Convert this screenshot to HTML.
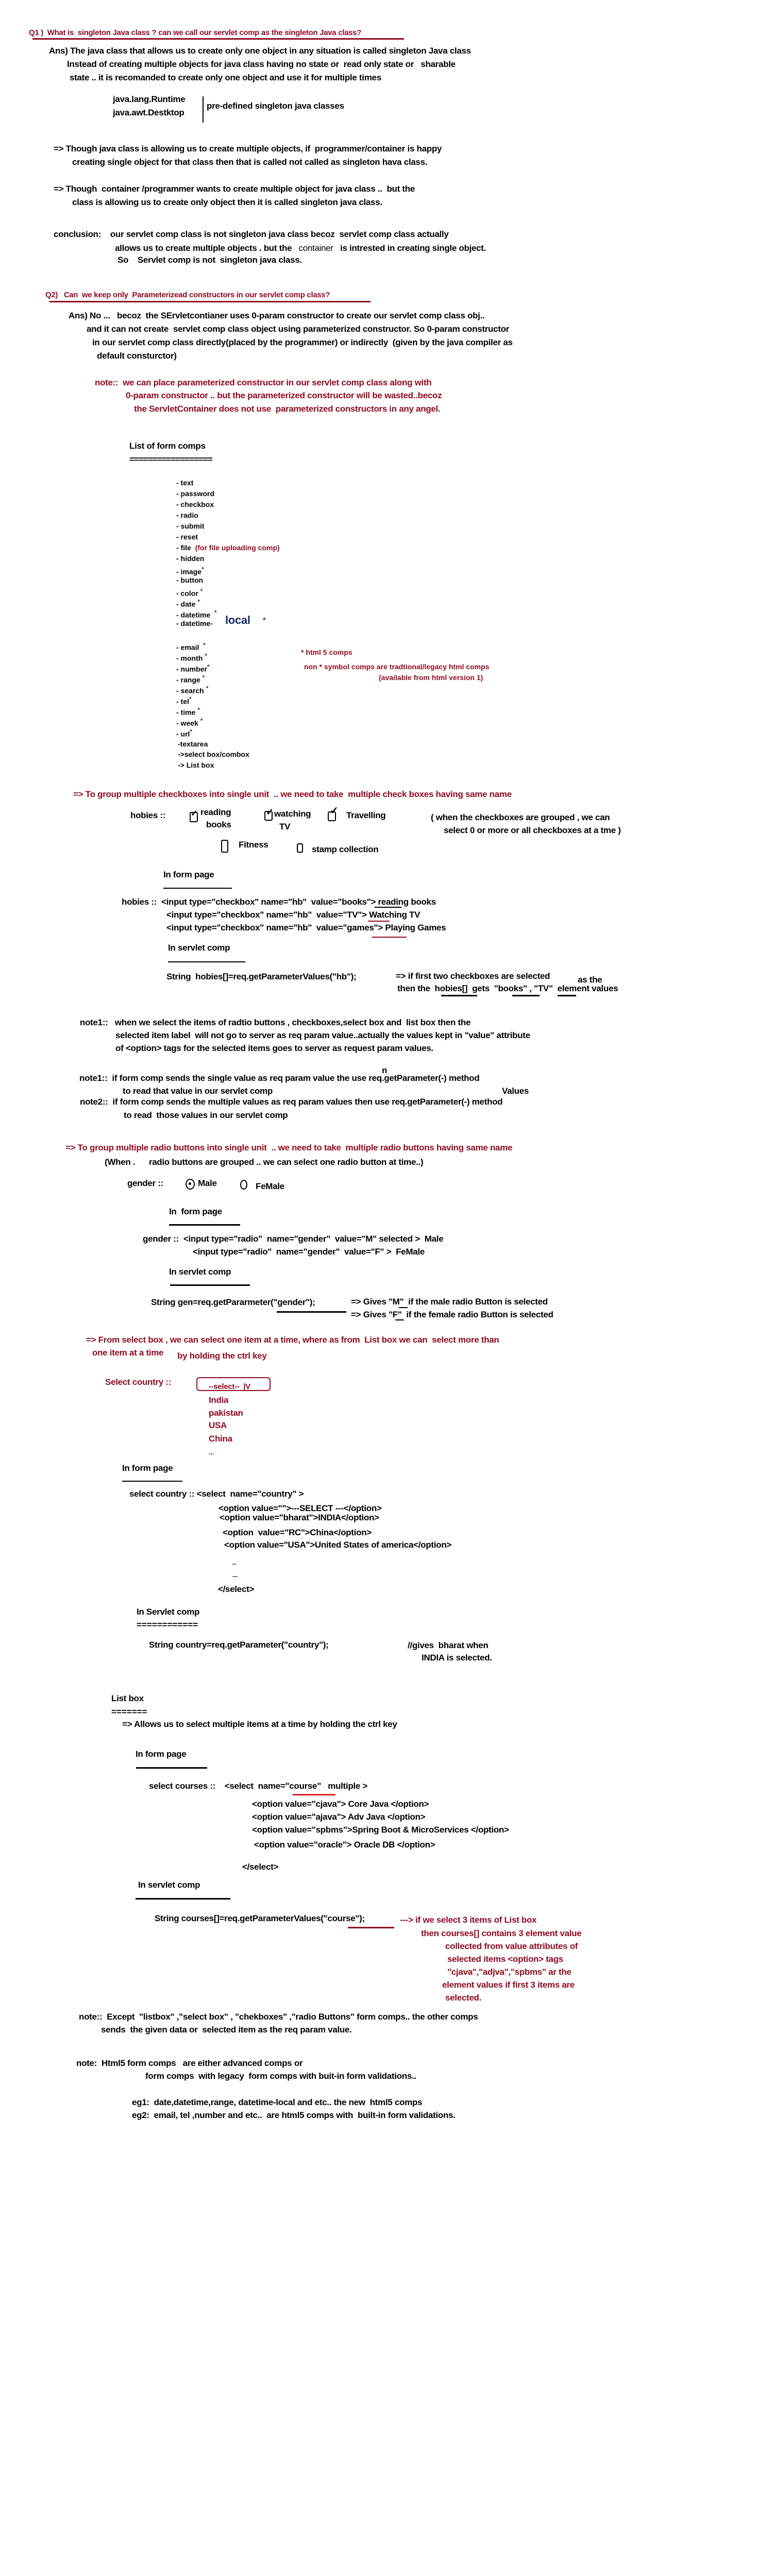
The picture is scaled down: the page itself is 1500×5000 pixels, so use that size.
<!DOCTYPE html>
<html><head><meta charset="utf-8">
<style>
html,body{margin:0;padding:0;background:#fff;}
body{width:1500px;height:5000px;position:relative;overflow:hidden;font-family:"Liberation Sans",sans-serif;}
.t{position:absolute;white-space:pre;line-height:20px;font-weight:bold;font-size:17px;color:#000;letter-spacing:-0.3px;}
.r{color:#8f0c22;}
.s{font-size:14px;letter-spacing:0;}
.h{font-size:15px;}
.ln{position:absolute;background:#000;}
.rl{position:absolute;background:#8f0c22;}
.cb{position:absolute;border:2px solid #000;border-radius:3px;}
.st{color:#8f0c22;font-size:12px;vertical-align:super;}
</style></head><body>

<!-- Q1 -->
<div class="t r h" style="left:56px;top:54px">Q1 )  What is  singleton Java class ? can we call our servlet comp as the singleton Java class?</div>
<div class="rl" style="left:63px;top:74px;width:721px;height:3px"></div>
<div class="t" style="left:95px;top:89px">Ans) The java class that allows us to create only one object in any situation is called singleton Java class</div>
<div class="t" style="left:130px;top:115px">Instead of creating multiple objects for java class having no state or  read only state or   sharable</div>
<div class="t" style="left:135px;top:141px">state .. it is recomanded to create only one object and use it for multiple times</div>
<div class="t" style="left:219px;top:183px">java.lang.Runtime</div>
<div class="t" style="left:219px;top:209px">java.awt.Destktop</div>
<div class="ln" style="left:393px;top:187px;width:2px;height:51px"></div>
<div class="t" style="left:401px;top:196px">pre-defined singleton java classes</div>
<div class="t" style="left:104px;top:279px">=&gt; Though java class is allowing us to create multiple objects, if  programmer/container is happy</div>
<div class="t" style="left:140px;top:305px">creating single object for that class then that is called not called as singleton hava class.</div>
<div class="t" style="left:104px;top:357px">=&gt; Though  container /programmer wants to create multiple object for java class ..  but the</div>
<div class="t" style="left:140px;top:383px">class is allowing us to create only object then it is called singleton java class.</div>
<div class="t" style="left:104px;top:445px">conclusion:    our servlet comp class is not singleton java class becoz  servlet comp class actually</div>
<div class="t" style="left:223px;top:472px">allows us to create multiple objects . but the   <span style="font-weight:normal">container</span>   is intrested in creating single object.</div>
<div class="t" style="left:228px;top:495px">So    Servlet comp is not  singleton java class.</div>

<!-- Q2 -->
<div class="t r h" style="left:88px;top:563px">Q2)   Can  we keep only  Parameterizead constructors in our servlet comp class?</div>
<div class="rl" style="left:96px;top:584px;width:623px;height:3px"></div>
<div class="t" style="left:133px;top:603px">Ans) No ...   becoz  the SErvletcontianer uses 0-param constructor to create our servlet comp class obj..</div>
<div class="t" style="left:168px;top:629px">and it can not create  servlet comp class object using parameterized constructor. So 0-param constructor</div>
<div class="t" style="left:179px;top:655px">in our servlet comp class directly(placed by the programmer) or indirectly  (given by the java compiler as</div>
<div class="t" style="left:188px;top:681px">default consturctor)</div>
<div class="t r" style="left:184px;top:733px">note::  we can place parameterized constructor in our servlet comp class along with</div>
<div class="t r" style="left:244px;top:758px">0-param constructor .. but the parameterized constructor will be wasted..becoz</div>
<div class="t r" style="left:260px;top:784px">the ServletContainer does not use  parameterized constructors in any angel.</div>
<div class="t" style="left:251px;top:856px">List of form comps</div>
<div class="t" style="left:251px;top:882px;letter-spacing:-1px">==================</div>

<!-- list -->
<div class="t s" style="left:342px;top:927px">- text</div>
<div class="t s" style="left:342px;top:948px">- password</div>
<div class="t s" style="left:342px;top:969px">- checkbox</div>
<div class="t s" style="left:342px;top:990px">- radio</div>
<div class="t s" style="left:342px;top:1011px">- submit</div>
<div class="t s" style="left:342px;top:1032px">- reset</div>
<div class="t s" style="left:342px;top:1053px">- file  <span class="r">(for file uploading comp)</span></div>
<div class="t s" style="left:342px;top:1074px">- hidden</div>
<div class="t s" style="left:342px;top:1095px">- image<span class="st">*</span></div>
<div class="t s" style="left:342px;top:1116px">- button</div>
<div class="t s" style="left:342px;top:1137px">- color <span class="st">*</span></div>
<div class="t s" style="left:342px;top:1158px">- date <span class="st">*</span></div>
<div class="t s" style="left:342px;top:1179px">- datetime  <span class="st">*</span></div>
<div class="t s" style="left:342px;top:1200px">- datetime-</div>
<div class="t" style="left:437px;top:1194px;font-size:22px;color:#1a2a6a">local</div>
<div class="t s r" style="left:510px;top:1193px">*</div>
<div class="t s" style="left:342px;top:1242px">- email  <span class="st">*</span></div>
<div class="t s" style="left:342px;top:1263px">- month <span class="st">*</span></div>
<div class="t s" style="left:342px;top:1284px">- number<span class="st">*</span></div>
<div class="t s" style="left:342px;top:1305px">- range <span class="st">*</span></div>
<div class="t s" style="left:342px;top:1326px">- search <span class="st">*</span></div>
<div class="t s" style="left:342px;top:1347px">- tel<span class="st">*</span></div>
<div class="t s" style="left:342px;top:1368px">- time <span class="st">*</span></div>
<div class="t s" style="left:342px;top:1389px">- week <span class="st">*</span></div>
<div class="t s" style="left:342px;top:1410px">- url<span class="st">*</span></div>
<div class="t s" style="left:345px;top:1434px">-textarea</div>
<div class="t s" style="left:345px;top:1454px">-&gt;select box/combox</div>
<div class="t s" style="left:345px;top:1475px">-&gt; List box</div>
<div class="t s r" style="left:584px;top:1256px">* html 5 comps</div>
<div class="t s r" style="left:590px;top:1284px">non * symbol comps are tradtional/legacy html comps</div>
<div class="t s r" style="left:735px;top:1305px">(available from html version 1)</div>

<!-- checkboxes -->
<div class="t r" style="left:142px;top:1532px">=&gt; To group multiple checkboxes into single unit  .. we need to take  multiple check boxes having same name</div>
<div class="t" style="left:253px;top:1573px">hobies ::</div>
<div class="cb" style="left:368px;top:1576px;width:12px;height:16px"></div><div class="t" style="left:370px;top:1570px;font-size:16px">✓</div>
<div class="t" style="left:389px;top:1567px">reading</div>
<div class="t" style="left:400px;top:1591px">books</div>
<div class="cb" style="left:513px;top:1574px;width:12px;height:15px"></div><div class="t" style="left:516px;top:1566px;font-size:18px">✓</div>
<div class="t" style="left:532px;top:1570px">watching</div>
<div class="t" style="left:542px;top:1595px">TV</div>
<div class="cb" style="left:636px;top:1575px;width:12px;height:15px"></div><div class="t" style="left:640px;top:1564px;font-size:20px">✓</div>
<div class="t" style="left:672px;top:1573px">Travelling</div>
<div class="t" style="left:836px;top:1577px">( when the checkboxes are grouped , we can</div>
<div class="t" style="left:861px;top:1602px">select 0 or more or all checkboxes at a tme )</div>
<div class="cb" style="left:429px;top:1630px;width:10px;height:21px"></div>
<div class="t" style="left:463px;top:1630px">Fitness</div>
<div class="cb" style="left:576px;top:1637px;width:8px;height:14px"></div>
<div class="t" style="left:605px;top:1639px">stamp collection</div>
<div class="t" style="left:317px;top:1688px">In form page</div>
<div class="ln" style="left:317px;top:1723px;width:133px;height:2px"></div>
<div class="t" style="left:236px;top:1741px">hobies ::  &lt;input type="checkbox" name="hb"  value="books"&gt; reading books</div>
<div class="ln" style="left:727px;top:1760px;width:52px;height:2px"></div>
<div class="t" style="left:323px;top:1766px">&lt;input type="checkbox" name="hb"  value="TV"&gt; Watching TV</div>
<div class="rl" style="left:714px;top:1787px;width:42px;height:2px"></div>
<div class="t" style="left:323px;top:1791px">&lt;input type="checkbox" name="hb"  value="games"&gt; Playing Games</div>
<div class="rl" style="left:722px;top:1818px;width:67px;height:2px"></div>
<div class="t" style="left:326px;top:1830px">In servlet comp</div>
<div class="ln" style="left:326px;top:1866px;width:150px;height:2px"></div>
<div class="t" style="left:323px;top:1886px">String  hobies[]=req.getParameterValues("hb");</div>
<div class="t" style="left:768px;top:1885px">=&gt; if first two checkboxes are selected</div>
<div class="t" style="left:1121px;top:1892px">as the</div>
<div class="t" style="left:771px;top:1909px">then the  hobies[]  gets  "books" , "TV"  element values</div>
<div class="ln" style="left:856px;top:1931px;width:70px;height:3px"></div>
<div class="ln" style="left:994px;top:1931px;width:53px;height:3px"></div>
<div class="ln" style="left:1082px;top:1931px;width:36px;height:3px"></div>

<!-- notes -->
<div class="t" style="left:155px;top:1975px">note1::   when we select the items of radtio buttons , checkboxes,select box and  list box then the</div>
<div class="t" style="left:224px;top:2000px">selected item label  will not go to server as req param value..actually the values kept in "value" attribute</div>
<div class="t" style="left:224px;top:2025px">of &lt;option&gt; tags for the selected items goes to server as request param values.</div>
<div class="t" style="left:741px;top:2068px">n</div>
<div class="t" style="left:154px;top:2083px">note1::  if form comp sends the single value as req param value the use req.getParameter(-) method</div>
<div class="t" style="left:238px;top:2108px">to read that value in our servlet comp</div>
<div class="t" style="left:974px;top:2108px">Values</div>
<div class="t" style="left:155px;top:2129px">note2::  if form comp sends the multiple values as req param values then use req.getParameter(-) method</div>
<div class="t" style="left:240px;top:2155px">to read  those values in our servlet comp</div>

<!-- radio -->
<div class="t r" style="left:127px;top:2218px">=&gt; To group multiple radio buttons into single unit  .. we need to take  multiple radio buttons having same name</div>
<div class="t" style="left:203px;top:2246px">(When .      radio buttons are grouped .. we can select one radio button at time..)</div>
<div class="t" style="left:247px;top:2287px">gender ::</div>
<div style="position:absolute;left:360px;top:2288px;width:14px;height:17px;border:2px solid #000;border-radius:50%"></div>
<div style="position:absolute;left:366px;top:2295px;width:5px;height:5px;background:#000;border-radius:50%"></div>
<div class="t" style="left:384px;top:2287px">Male</div>
<div style="position:absolute;left:466px;top:2290px;width:10px;height:15px;border:2px solid #000;border-radius:50%"></div>
<div class="t" style="left:496px;top:2293px">FeMale</div>
<div class="t" style="left:328px;top:2342px">In  form page</div>
<div class="ln" style="left:328px;top:2376px;width:138px;height:3px"></div>
<div class="t" style="left:277px;top:2395px">gender ::  &lt;input type="radio"  name="gender"  value="M" selected &gt;  Male</div>
<div class="t" style="left:374px;top:2420px">&lt;input type="radio"  name="gender"  value="F" &gt;  FeMale</div>
<div class="t" style="left:328px;top:2459px">In servlet comp</div>
<div class="ln" style="left:330px;top:2493px;width:155px;height:3px"></div>
<div class="t" style="left:293px;top:2518px">String gen=req.getPararmeter("gender");</div>
<div class="ln" style="left:537px;top:2545px;width:135px;height:3px"></div>
<div class="t" style="left:681px;top:2517px">=&gt; Gives "M"  if the male radio Button is selected</div>
<div class="ln" style="left:774px;top:2537px;width:17px;height:2px"></div>
<div class="t" style="left:681px;top:2542px">=&gt; Gives "F"  if the female radio Button is selected</div>
<div class="ln" style="left:767px;top:2561px;width:17px;height:2px"></div>

<!-- select -->
<div class="t r" style="left:167px;top:2591px">=&gt; From select box , we can select one item at a time, where as from  List box we can  select more than</div>
<div class="t r" style="left:179px;top:2616px">one item at a time</div>
<div class="t r" style="left:344px;top:2622px">by holding the ctrl key</div>
<div class="t r" style="left:204px;top:2673px">Select country ::</div>
<div style="position:absolute;left:381px;top:2673px;width:140px;height:23px;border:2px solid #8f0c22;border-radius:6px"></div>
<div class="t r" style="left:405px;top:2682px;font-size:15px">--select--  |V</div>
<div class="t r" style="left:405px;top:2708px">India</div>
<div class="t r" style="left:405px;top:2733px">pakistan</div>
<div class="t r" style="left:405px;top:2757px">USA</div>
<div class="t r" style="left:405px;top:2783px">China</div>
<div class="t r" style="left:405px;top:2809px;font-size:13px">...</div>
<div class="t" style="left:237px;top:2840px">In form page</div>
<div class="ln" style="left:237px;top:2874px;width:117px;height:2px"></div>
<div class="t" style="left:251px;top:2890px">select country :: &lt;select  name="country" &gt;</div>
<div class="t" style="left:424px;top:2918px">&lt;option value=""&gt;---SELECT ---&lt;/option&gt;</div>
<div class="t" style="left:426px;top:2936px">&lt;option value="bharat"&gt;INDIA&lt;/option&gt;</div>
<div class="t" style="left:432px;top:2965px">&lt;option  value="RC"&gt;China&lt;/option&gt;</div>
<div class="t" style="left:435px;top:2989px">&lt;option value="USA"&gt;United States of america&lt;/option&gt;</div>
<div class="t" style="left:451px;top:3023px;font-size:13px">..</div>
<div class="t" style="left:451px;top:3047px;font-size:13px">...</div>
<div class="t" style="left:423px;top:3075px">&lt;/select&gt;</div>
<div class="t" style="left:265px;top:3119px">In Servlet comp</div>
<div class="t" style="left:265px;top:3144px;letter-spacing:0">============</div>
<div class="t" style="left:289px;top:3183px">String country=req.getParameter("country");</div>
<div class="t" style="left:791px;top:3184px">//gives  bharat when</div>
<div class="t" style="left:818px;top:3208px">INDIA is selected.</div>

<!-- list box -->
<div class="t" style="left:216px;top:3287px">List box</div>
<div class="t" style="left:216px;top:3313px;letter-spacing:0">=======</div>
<div class="t" style="left:237px;top:3337px">=&gt; Allows us to select multiple items at a time by holding the ctrl key</div>
<div class="t" style="left:263px;top:3395px">In form page</div>
<div class="ln" style="left:264px;top:3430px;width:138px;height:3px"></div>
<div class="t" style="left:289px;top:3457px">select courses ::    &lt;select  name="course"   multiple &gt;</div>
<div style="position:absolute;left:568px;top:3482px;width:83px;height:3px;background:#e02020"></div>
<div class="t" style="left:489px;top:3492px">&lt;option value="cjava"&gt; Core Java &lt;/option&gt;</div>
<div class="t" style="left:489px;top:3517px">&lt;option value="ajava"&gt; Adv Java &lt;/option&gt;</div>
<div class="t" style="left:489px;top:3542px">&lt;option value="spbms"&gt;Spring Boot &amp; MicroServices &lt;/option&gt;</div>
<div class="t" style="left:493px;top:3571px">&lt;option value="oracle"&gt; Oracle DB &lt;/option&gt;</div>
<div class="t" style="left:470px;top:3614px">&lt;/select&gt;</div>
<div class="t" style="left:268px;top:3649px">In servlet comp</div>
<div class="ln" style="left:263px;top:3684px;width:184px;height:3px"></div>
<div class="t" style="left:300px;top:3714px">String courses[]=req.getParameterValues("course");</div>
<div class="rl" style="left:675px;top:3740px;width:90px;height:3px"></div>
<div class="t r" style="left:776px;top:3717px">---&gt; if we select 3 items of List box</div>
<div class="t r" style="left:817px;top:3743px">then courses[] contains 3 element value</div>
<div class="t r" style="left:864px;top:3768px">collected from value attributes of</div>
<div class="t r" style="left:868px;top:3793px">selected items &lt;option&gt; tags</div>
<div class="t r" style="left:868px;top:3818px">"cjava","adjva","spbms" ar the</div>
<div class="t r" style="left:858px;top:3843px">element values if first 3 items are</div>
<div class="t r" style="left:864px;top:3868px">selected.</div>

<!-- final notes -->
<div class="t" style="left:153px;top:3905px">note::  Except  "listbox" ,"select box" , "chekboxes" ,"radio Buttons" form comps.. the other comps</div>
<div class="t" style="left:196px;top:3930px">sends  the given data or  selected item as the req param value.</div>
<div class="t" style="left:148px;top:3995px">note:  Html5 form comps   are either advanced comps or</div>
<div class="t" style="left:282px;top:4020px">form comps  with legacy  form comps with buit-in form validations..</div>
<div class="t" style="left:256px;top:4071px">eg1:  date,datetime,range, datetime-local and etc.. the new  html5 comps</div>
<div class="t" style="left:256px;top:4096px">eg2:  email, tel ,number and etc..  are html5 comps with  built-in form validations.</div>

</body></html>
